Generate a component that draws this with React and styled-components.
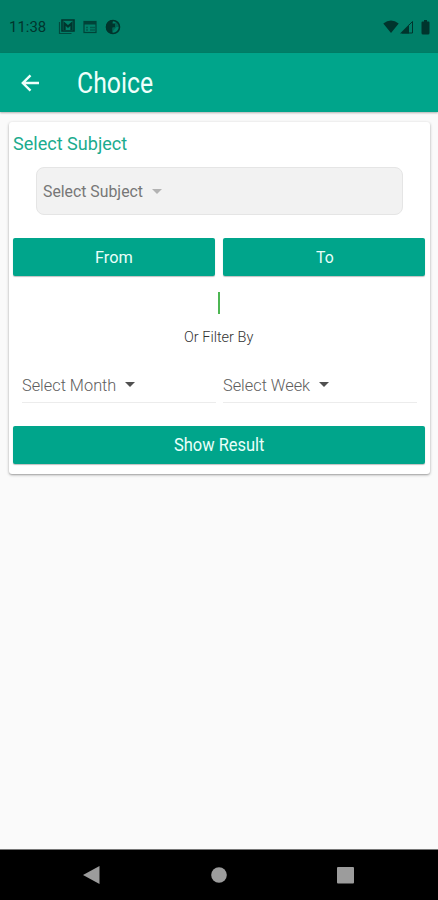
import React from "react";
import styled, { createGlobalStyle } from "styled-components";

const Global = createGlobalStyle`
  *, *::before, *::after { box-sizing: border-box; }
  body { margin: 0; font-family: Roboto, "Noto Sans", sans-serif; }
`;

const Screen = styled.div`
  width: 438px;
  height: 900px;
  display: flex;
  flex-direction: column;
  background: #fafafa;
  overflow: hidden;
`;

const StatusBar = styled.header`
  height: 53px;
  flex: none;
  padding: 2px 7px 0 9px;
  display: flex;
  align-items: center;
  background: #007f68;
  color: #00352d;
`;

const Notifications = styled.div`
  display: flex;
  align-items: center;
  gap: 8px;
  margin-left: 12px;
  padding-bottom: 1px;
  svg { display: block; }
`;

const Signals = styled.div`
  display: flex;
  align-items: center;
  margin-left: auto;
  padding-bottom: 1px;
  svg { display: block; }
`;

const AppBar = styled.nav`
  height: 59px;
  flex: none;
  display: flex;
  align-items: center;
  padding: 1px 0 0 18px;
  background: #00a58b;
  color: #effffb;
  box-shadow: 0 1px 2px rgba(0, 0, 0, 0.3);
`;

const BackButton = styled.button`
  display: block;
  width: 24px;
  height: 24px;
  padding: 0;
  margin-right: 35px;
  border: 0;
  background: none;
  color: inherit;
  svg { display: block; }
`;

const Label = styled.span`
  display: block;
  flex: none;
  width: ${(p) => p.$width}px;
  font-size: ${(p) => p.$size}px;
  font-weight: ${(p) => p.$weight || 400};
  line-height: 1.2;
  white-space: nowrap;
  transform: scaleX(${(p) => p.$stretch || 1});
  transform-origin: left center;
`;

const Content = styled.main`
  flex: 1;
  padding: 10px 8px 0 9px;
`;

const Card = styled.section`
  height: 352px;
  padding: 11px 5px 0 4px;
  display: flex;
  flex-direction: column;
  background: #fff;
  border-radius: 3px;
  box-shadow: 0 1px 3px rgba(0, 0, 0, 0.32), 0 1px 1px rgba(0, 0, 0, 0.1);
`;

const Heading = styled.h2`
  margin: 0;
  height: 34px;
  font-weight: 400;
  color: #1bab8e;
`;

const SubjectField = styled.div`
  display: flex;
  align-items: center;
  gap: 9px;
  height: 48px;
  margin: 0 22px 0 23px;
  padding-left: 6px;
  border: 1px solid #e5e5e5;
  border-radius: 8px;
  background: #f2f2f2;
  color: #777;
`;

const ButtonRow = styled.div`
  display: flex;
  gap: 8px;
  margin-top: 23px;
`;

const ActionButton = styled.button`
  flex: 1;
  height: 38px;
  padding: 0;
  display: flex;
  align-items: center;
  justify-content: center;
  border: 0;
  border-radius: 2px;
  background: #00a58b;
  color: #e9fffa;
  font-family: inherit;
  box-shadow: 0 1px 1px rgba(0, 0, 0, 0.25);
`;

const Divider = styled.div`
  width: 2px;
  height: 22px;
  margin: 16px auto 0;
  background: #4db653;
`;

const FilterCaption = styled.div`
  display: flex;
  justify-content: center;
  margin-top: 15px;
  color: #333;
`;

const FilterRow = styled.div`
  display: flex;
  gap: 7px;
  margin: 21px 8px 0 9px;
`;

const FilterField = styled.div`
  flex: 1;
  height: 36px;
  display: flex;
  align-items: center;
  gap: 9px;
  border-bottom: 1px solid #ececec;
  color: #5e5e5e;
`;

const Caret = styled.i`
  width: 0;
  height: 0;
  border: 5px solid transparent;
  border-bottom: 0;
  border-top-color: ${(p) => (p.$muted ? "#b3b3b3" : "#505050")};
`;

const NavBar = styled.footer`
  height: 51px;
  flex: none;
  display: flex;
  align-items: center;
  padding: 0 84px 0 83px;
  justify-content: space-between;
  background: #000;
  border-top: 1px solid #777;
  color: #9c9c9c;
  svg { display: block; }
`;

export default function App() {
  return (
    <Screen>
      <Global />
      <StatusBar>
        <Label $width={37} $size={14.5} $stretch={1.03}>11:38</Label>
        <Notifications>
          <svg width="17" height="16" viewBox="0 0 17 16" fill="none" stroke="currentColor">
            <path d="M1.5 3v11.5h12" strokeWidth="1.2" opacity=".7" />
            <path d="M4 1h12v11H4z" strokeWidth="1.6" />
            <path d="M6.5 11V4.500l3.500 3 3.500-3V11" strokeWidth="2.300" />
          </svg>
          <svg width="14" height="14" viewBox="0 0 14 14" fill="none" stroke="currentColor" opacity=".8">
            <rect x="1" y="1.500" width="12" height="11" strokeWidth="1.200" />
            <path d="M1 3h12" strokeWidth="3" />
            <path d="M3 7.500h2M3 10h2M7 7.500h5M7 10h5" strokeWidth="1.300" opacity=".6" />
          </svg>
          <svg width="16" height="16" viewBox="0 0 16 16">
            <circle cx="8" cy="8" r="6.500" fill="none" stroke="currentColor" strokeWidth="1.600" />
            <path d="M8 1A7 7 0 0 0 3 12.900L7.500 15V8.500H10v-4H7.500z" fill="currentColor" />
            <path d="M10 3.500h3L15 8h-3.500L8 12V9h2z" fill="currentColor" opacity=".35" />
          </svg>
        </Notifications>
        <Signals>
          <svg width="16" height="14" viewBox="0 0 16 14">
            <path d="M.3 3.500Q8-2.500 15.700 3.500L8 13z" fill="currentColor" />
          </svg>
          <svg width="16" height="14" viewBox="0 0 16 14">
            <path d="M1 13.500L10 4.500v9z" fill="currentColor" />
            <path d="M10 5l3.500-3.500V13H3" fill="none" stroke="currentColor" />
          </svg>
          <svg width="16" height="15" viewBox="0 0 16 15">
            <path d="M7.500 1.500H9V0h3v1.500h1.500q1 0 1 1V13q0 1.500-1.500 1.500H8Q6.500 14.500 6.500 13V2.500q0-1 1-1z" fill="currentColor" />
          </svg>
        </Signals>
      </StatusBar>
      <AppBar>
        <BackButton aria-label="Back">
          <svg width="24" height="24" viewBox="0 0 24 24" fill="none" stroke="currentColor" strokeWidth="2.400">
            <path d="M21 12H5M12.500 4.300L4.800 12l7.700 7.700" />
          </svg>
        </BackButton>
        <Label $width={76} $size={29} $stretch={0.855}>Choice</Label>
      </AppBar>
      <Content>
        <Card>
          <Heading><Label $width={114} $size={19} $stretch={0.95}>Select Subject</Label></Heading>
          <SubjectField>
            <Label $width={100} $size={17} $stretch={0.93}>Select Subject</Label>
            <Caret $muted />
          </SubjectField>
          <ButtonRow>
            <ActionButton><Label $width={38} $size={17} $stretch={0.96}>From</Label></ActionButton>
            <ActionButton><Label $width={17} $size={17} $stretch={0.93}>To</Label></ActionButton>
          </ButtonRow>
          <Divider />
          <FilterCaption><Label $width={70} $size={14.5} $weight={300}>Or Filter By</Label></FilterCaption>
          <FilterRow>
            <FilterField><Label $width={94} $size={17} $weight={300} $stretch={0.96}>Select Month</Label><Caret /></FilterField>
            <FilterField><Label $width={87} $size={17} $weight={300} $stretch={0.96}>Select Week</Label><Caret /></FilterField>
          </FilterRow>
          <ButtonRow>
            <ActionButton><Label $width={91} $size={17.5} $stretch={0.94}>Show Result</Label></ActionButton>
          </ButtonRow>
        </Card>
      </Content>
      <NavBar>
        <svg width="17" height="20" viewBox="0 0 17 20"><path d="M0 10L16.500 1v18z" fill="currentColor" /></svg>
        <svg width="16" height="16" viewBox="0 0 16 16"><circle cx="8" cy="8" r="7.800" fill="currentColor" /></svg>
        <svg width="17" height="17" viewBox="0 0 17 17"><rect width="17" height="16.500" rx="1" fill="currentColor" /></svg>
      </NavBar>
    </Screen>
  );
}
